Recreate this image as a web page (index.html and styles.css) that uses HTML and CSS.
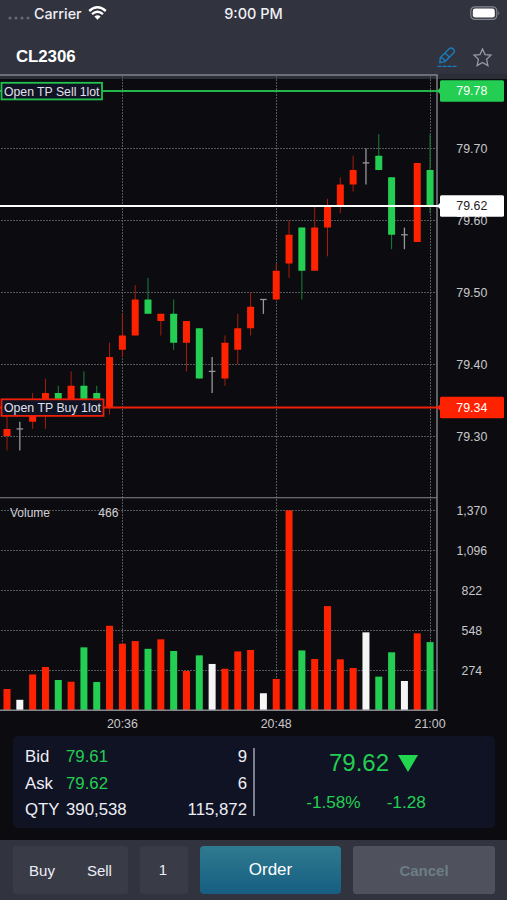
FILE: index.html
```html
<!DOCTYPE html>
<html lang="en">
<head>
    <meta charset="UTF-8">
    <meta name="viewport" content="width=device-width, initial-scale=1.0">
    <title>CL2306</title>
    <link rel="stylesheet" href="styles.css">
</head>
<body>

    <header class="header">
        <div class="status-bar">
            <div class="carrier">
                <svg class="signal" width="22" height="6" viewBox="0 0 22 6">
                    <circle cx="2" cy="3" r="1.6"/>
                    <circle cx="8" cy="3" r="1.6"/>
                    <circle cx="14" cy="3" r="1.6"/>
                    <circle cx="20" cy="3" r="1.6"/>
                </svg>
                <span class="carrier-name">Carrier</span>
                <svg class="wifi" width="19" height="14" viewBox="0 0 19 14">
                    <path d="M1.2 5 Q9.5 -2.4 17.8 5"/>
                    <path d="M4 8.1 Q9.5 3.4 15 8.1"/>
                    <path class="wifi-dot" d="M6.4 10.5 Q9.5 8 12.6 10.5 L9.5 13.7 Z"/>
                </svg>
            </div>
            <div class="clock">9:00 PM</div>
            <svg class="battery" width="31" height="15" viewBox="0 0 31 15">
                <rect class="battery-case" x="0.8" y="0.8" width="26" height="12.6" rx="4"/>
                <rect x="2.8" y="2.6" width="22" height="9" rx="2.4"/>
                <path class="battery-tip" d="M28.3 5 Q30.2 7 28.3 9.2 Z"/>
            </svg>
        </div>
        <div class="title-bar">
            <h1 class="symbol">CL2306</h1>
            <div class="tools">
                <svg class="pencil" width="20" height="21" viewBox="0 0 20 21">
                    <path d="M2.8 15.6 L3.4 10.6 L12.2 1.7 Q14.2 0.2 16.2 1.9 Q18.4 4 16.8 5.8 L8 14.6 Z"/>
                    <path d="M3.4 10.6 Q7 11 8 14.6 M8 6 L12.6 10.2"/>
                    <path class="dash" d="M0.5 19.4 H19.5"/>
                </svg>
                <svg class="star" width="19" height="19" viewBox="0 0 19 19">
                    <path d="M9.5 1 L12 6.6 L18 7.1 L13.6 11.3 L14.9 17.6 L9.5 14.4 L4.1 17.6 L5.4 11.3 L1 7.1 L7 6.6 Z"/>
                </svg>
            </div>
        </div>
    </header>

    <svg id="chart" class="chart" width="507" height="662" viewBox="0 74 507 662"></svg>

    <section class="quote">
        <div class="book">
            <span>Bid</span><span class="down">79.61</span><span class="size">9</span>
            <span>Ask</span><span class="down">79.62</span><span class="size">6</span>
            <span>QTY</span><span>390,538</span><span class="size">115,872</span>
        </div>
        <div class="divider"></div>
        <div class="last">
            <div class="last-price">
                <span>79.62</span>
                <svg width="20" height="17" viewBox="0 0 20 17"><path d="M0 0 H20 L10 17 Z"/></svg>
            </div>
            <div class="change"><span>-1.58%</span><span>-1.28</span></div>
        </div>
    </section>

    <footer class="order-bar">
        <div class="side"><span>Buy</span><span>Sell</span></div>
        <div class="lots">1</div>
        <button class="order">Order</button>
        <button class="cancel">Cancel</button>
    </footer>

    <script>
        // [high, low, top, bottom, volume, type] - prices in cents above 79.00
        const bars = [
            [33, 28, 31, 30, 144, "r"], [32, 28, 31, 31, 70, "w"],
            [36, 31, 34, 32, 244, "r"], [38, 31, 36, 33, 295, "r"],
            [37, 34, 36, 34, 206, "g"], [39, 34, 37, 34, 194, "r"],
            [39, 34, 37, 34, 430, "g"], [37, 34, 36, 34, 192, "g"],
            [43, 33, 41, 34, 578, "r"], [47, 41, 44, 42, 455, "r"],
            [51, 44, 49, 44, 473, "r"], [52, 47, 49, 47, 420, "g"],
            [47, 44, 47, 46, 485, "r"], [49, 42, 47, 43, 405, "g"],
            [46, 39, 46, 43, 268, "r"], [45, 38, 45, 38, 375, "g"],
            [41, 36, 39, 39, 316, "w"], [44, 37, 43, 38, 283, "r"],
            [47, 40, 45, 42, 402, "r"], [50, 44, 48, 45, 412, "r"],
            [49, 47, 49, 49, 115, "w"], [54, 49, 53, 49, 213, "r"],
            [60, 52, 58, 54, 1370, "r"], [59, 49, 59, 53, 409, "g"],
            [62, 53, 59, 53, 350, "r"], [63, 55, 62, 59, 713, "r"],
            [66, 61, 65, 62, 348, "r"], [69, 64, 67, 65, 288, "r"],
            [70, 65, 68, 68, 533, "w"], [72, 67, 69, 67, 229, "g"],
            [66, 56, 66, 58, 396, "g"], [59, 56, 58, 58, 199, "w"],
            [68, 57, 68, 57, 526, "r"], [72, 61, 67, 62, 466, "g"]
        ];

        const right = 437, base = 710;
        const xAt = i => 7 + i * 12.82;
        const yAt = p => 148.5 + (70 - p) * 7.19;
        const vAt = v => base - v * 0.1457;

        let out = "";

        function line(cls, x1, y1, x2, y2) {
            out += `<line class="${cls}" x1="${x1}" y1="${y1}" x2="${x2}" y2="${y2}"/>`;
        }
        function rect(cls, x, y, w, h, r = 0) {
            out += `<rect class="${cls}" x="${x}" y="${y}" width="${w}" height="${h}" rx="${r}"/>`;
        }
        function text(cls, x, y, str, w) {
            out += `<text class="${cls}" x="${x}" y="${y}" textLength="${w}" lengthAdjust="spacingAndGlyphs">${str}</text>`;
        }

        // strip under the title bar
        rect("strip", 0, 74, 507, 5);

        // grid and axis labels
        [70, 60, 50, 40, 30].forEach(p => {
            line("grid", 1, Math.floor(yAt(p)) + 0.5, right, Math.floor(yAt(p)) + 0.5);
            text("axis", 471.8, yAt(p) + 4.7, "79." + p, 31);
        });
        [1370, 1096, 822, 548, 274].forEach(v => {
            line("grid", 1, Math.round(vAt(v)) + 0.5, right, Math.round(vAt(v)) + 0.5);
            text("axis", 471.8, vAt(v) + 5, v.toLocaleString("en-US"), v > 999 ? 30.5 : 20.5);
        });
        [[9, "20:36"], [21, "20:48"], [33, "21:00"]].forEach(([i, label]) => {
            line("grid", Math.round(xAt(i)) + 0.5, 76, Math.round(xAt(i)) + 0.5, base);
            text("axis", xAt(i), 728, label, 31);
        });

        // candles and volume
        bars.forEach(([high, low, top, bottom, volume, type], i) => {
            const x = xAt(i);
            line("wick " + type, x, yAt(high), x, yAt(low));
            if (type === "w") {
                line("wick " + type, x - 3.3, yAt(top), x + 3.3, yAt(top));
            } else {
                rect("body " + type, x - 3.5, yAt(top), 7, yAt(bottom) - yAt(top), 0.5);
            }
            rect("body " + type, x - 3.5, vAt(volume), 7, base - vAt(volume));
        });

        // frame
        line("frame", 0, 75, right + 0.7, 75);
        line("frame", right, 75, right, base + 0.5);
        line("frame thin", 0, 497.7, right, 497.7);
        line("frame", 0, base + 0.3, right + 0.7, base + 0.3);

        // price lines
        function priceLine(cls, y, price, label, w) {
            line("level " + cls, 0, y, 441, y);
            out += `<path class="tag ${cls}" d="M437 ${y} L441 ${y - 4} V${y + 4} Z"/>`;
            rect("tag " + cls, 440, y - 10.7, 64, 21.4, 1.5);
            text("tag-text " + cls, 471.8, y + 4.4, price, 31);
            if (label) {
                rect("label " + cls, 1.5, y - 8.2, w, 16.6);
                text("label-text", 4, y + 4.9, label, w - 5);
            }
        }
        priceLine("g", 91, "79.78", "Open TP Sell 1lot", 100.5);
        priceLine("w", 206, "79.62");
        priceLine("r", 407.5, "79.34", "Open TP Buy 1lot", 102);

        text("note", 10, 517, "Volume", 40);
        text("note", 98.3, 517, "466", 20.3);

        document.getElementById("chart").innerHTML = out;
    </script>

</body>
</html>
```
FILE: styles.css
```css
:root {
    --bar: #31333e;
    --bg: #0c0c10;
    --panel: #101324;
    --green: #23ce52;
    --red: #ff2200;
    --text: #eeeef6;
}

* {
    box-sizing: border-box;
}

body {
    margin: 0;
    width: 507px;
    height: 900px;
    display: flex;
    flex-direction: column;
    overflow: hidden;
    background: var(--bg);
    color: var(--text);
    font-family: "Liberation Sans", Arial, sans-serif;
}

/* Header */
.header {
    height: 74px;
    background: var(--bar);
}

.status-bar {
    height: 26px;
    display: grid;
    grid-template-columns: 1fr auto 1fr;
    align-items: center;
    padding: 0 6px 0 8px;
    font-family: Inter, sans-serif;
    font-size: 14.3px;
    font-weight: 500;
}

.clock {
    padding-right: 2px;
    font-size: 14.5px;
}

.carrier {
    display: flex;
    align-items: center;
}

.signal {
    margin: 9px 4px 0 0;
    fill: #666873;
}

.wifi {
    margin-left: 6px;
    fill: none;
    stroke: #fff;
    stroke-width: 2.4;
}

.wifi .wifi-dot {
    fill: #fff;
    stroke: none;
}

.battery {
    justify-self: end;
    fill: #fff;
}

.battery-case {
    fill: none;
    stroke: #858690;
    stroke-width: 1.2;
}

.battery-tip {
    fill: #858690;
}

.title-bar {
    height: 48px;
    display: flex;
    justify-content: space-between;
    align-items: center;
    padding: 14px 15px 0 16px;
}

.symbol {
    margin: 0;
    font-size: 16.9px;
    letter-spacing: -0.1px;
    color: #fff;
}

.tools {
    display: flex;
    align-items: center;
    gap: 16px;
}

.pencil {
    fill: none;
    stroke: #197cbd;
    stroke-width: 1.4;
}

.dash {
    stroke-dasharray: 4 1;
}

.star {
    fill: none;
    stroke: #989aa4;
    stroke-width: 1.3;
}

/* Chart */
.chart {
    display: block;
    flex: none;
}

.strip {
    fill: #2b2d37;
}

.grid {
    stroke: #55565b;
    stroke-width: 1;
    stroke-dasharray: 2 1;
}

.frame {
    stroke: #85868e;
    stroke-width: 1.4;
}

.frame.thin {
    stroke-width: 1.1;
}

.wick {
    stroke-width: 1;
}

.wick.r { stroke: #a81c0c; }
.wick.g { stroke: #1b8138; }
.wick.w { stroke: #97979b; stroke-width: 1.3; }

.body.r, .tag.r { fill: var(--red); }
.body.g, .tag.g { fill: var(--green); }
.body.w { fill: #f5f5f5; }
.tag.w { fill: #fff; }

.level { stroke-width: 2; }
.level.r { stroke: #ed2007; }
.level.g { stroke: #24b54b; }
.level.w { stroke: #fff; }

.label {
    fill: #101324;
    stroke-width: 1.8;
}

.label.r { stroke: #ed2007; }
.label.g { stroke: #22c44e; }

.axis, .tag-text {
    font-size: 12.5px;
    fill: #c8c8cc;
    text-anchor: middle;
}

.tag-text {
    fill: #fff;
}

.tag-text.w {
    fill: #222;
}

.label-text {
    font-size: 12.5px;
    fill: #e0e1ec;
}

.note {
    font-size: 12.2px;
    fill: #d0d0d4;
}

/* Quote panel */
.quote {
    height: 92px;
    flex: none;
    margin: 0 12px 0 13px;
    padding: 8px 0 5px 12px;
    display: flex;
    background: var(--panel);
    border-radius: 5px;
}

.book {
    width: 222px;
    display: grid;
    grid-template-columns: 41px 1fr 1fr;
    grid-template-rows: repeat(3, 26.5px);
    align-items: center;
    font-size: 16.8px;
}

.size {
    text-align: right;
}

.down {
    color: var(--green);
}

.divider {
    width: 2px;
    height: 68px;
    margin: 4px 0 0 6px;
    background: #7c7f8d;
}

.last {
    flex: 1;
    padding-right: 3px;
    color: var(--green);
}

.last-price {
    height: 38px;
    display: flex;
    justify-content: center;
    align-items: center;
    gap: 9px;
    font-size: 24px;
}

.last-price svg {
    fill: #22d74f;
}

.change {
    height: 40px;
    display: flex;
    justify-content: center;
    align-items: center;
    gap: 26px;
    padding-right: 15px;
    font-size: 17.2px;
}

/* Order bar */
.order-bar {
    height: 60px;
    margin-top: auto;
    padding: 6px 12px 6px 13px;
    display: flex;
    gap: 12px;
    background: var(--bar);
    font-size: 15px;
}

.side, .lots {
    display: flex;
    justify-content: center;
    align-items: center;
    background: #393c47;
    border-radius: 3px;
}

.side {
    width: 115px;
    gap: 32px;
}

.lots {
    width: 48px;
    padding: 0 2px 2px 0;
}

.order, .cancel {
    border: none;
    padding: 0;
    border-radius: 4px;
    font-family: inherit;
}

.order {
    width: 141px;
    background: linear-gradient(#2f7a8f, #175e82);
    color: #fff;
    font-size: 17px;
}

.cancel {
    flex: 1;
    border-radius: 3px;
    background: #4f515d;
    color: #6d7d85;
    font-size: 15px;
    font-weight: bold;
}
```
